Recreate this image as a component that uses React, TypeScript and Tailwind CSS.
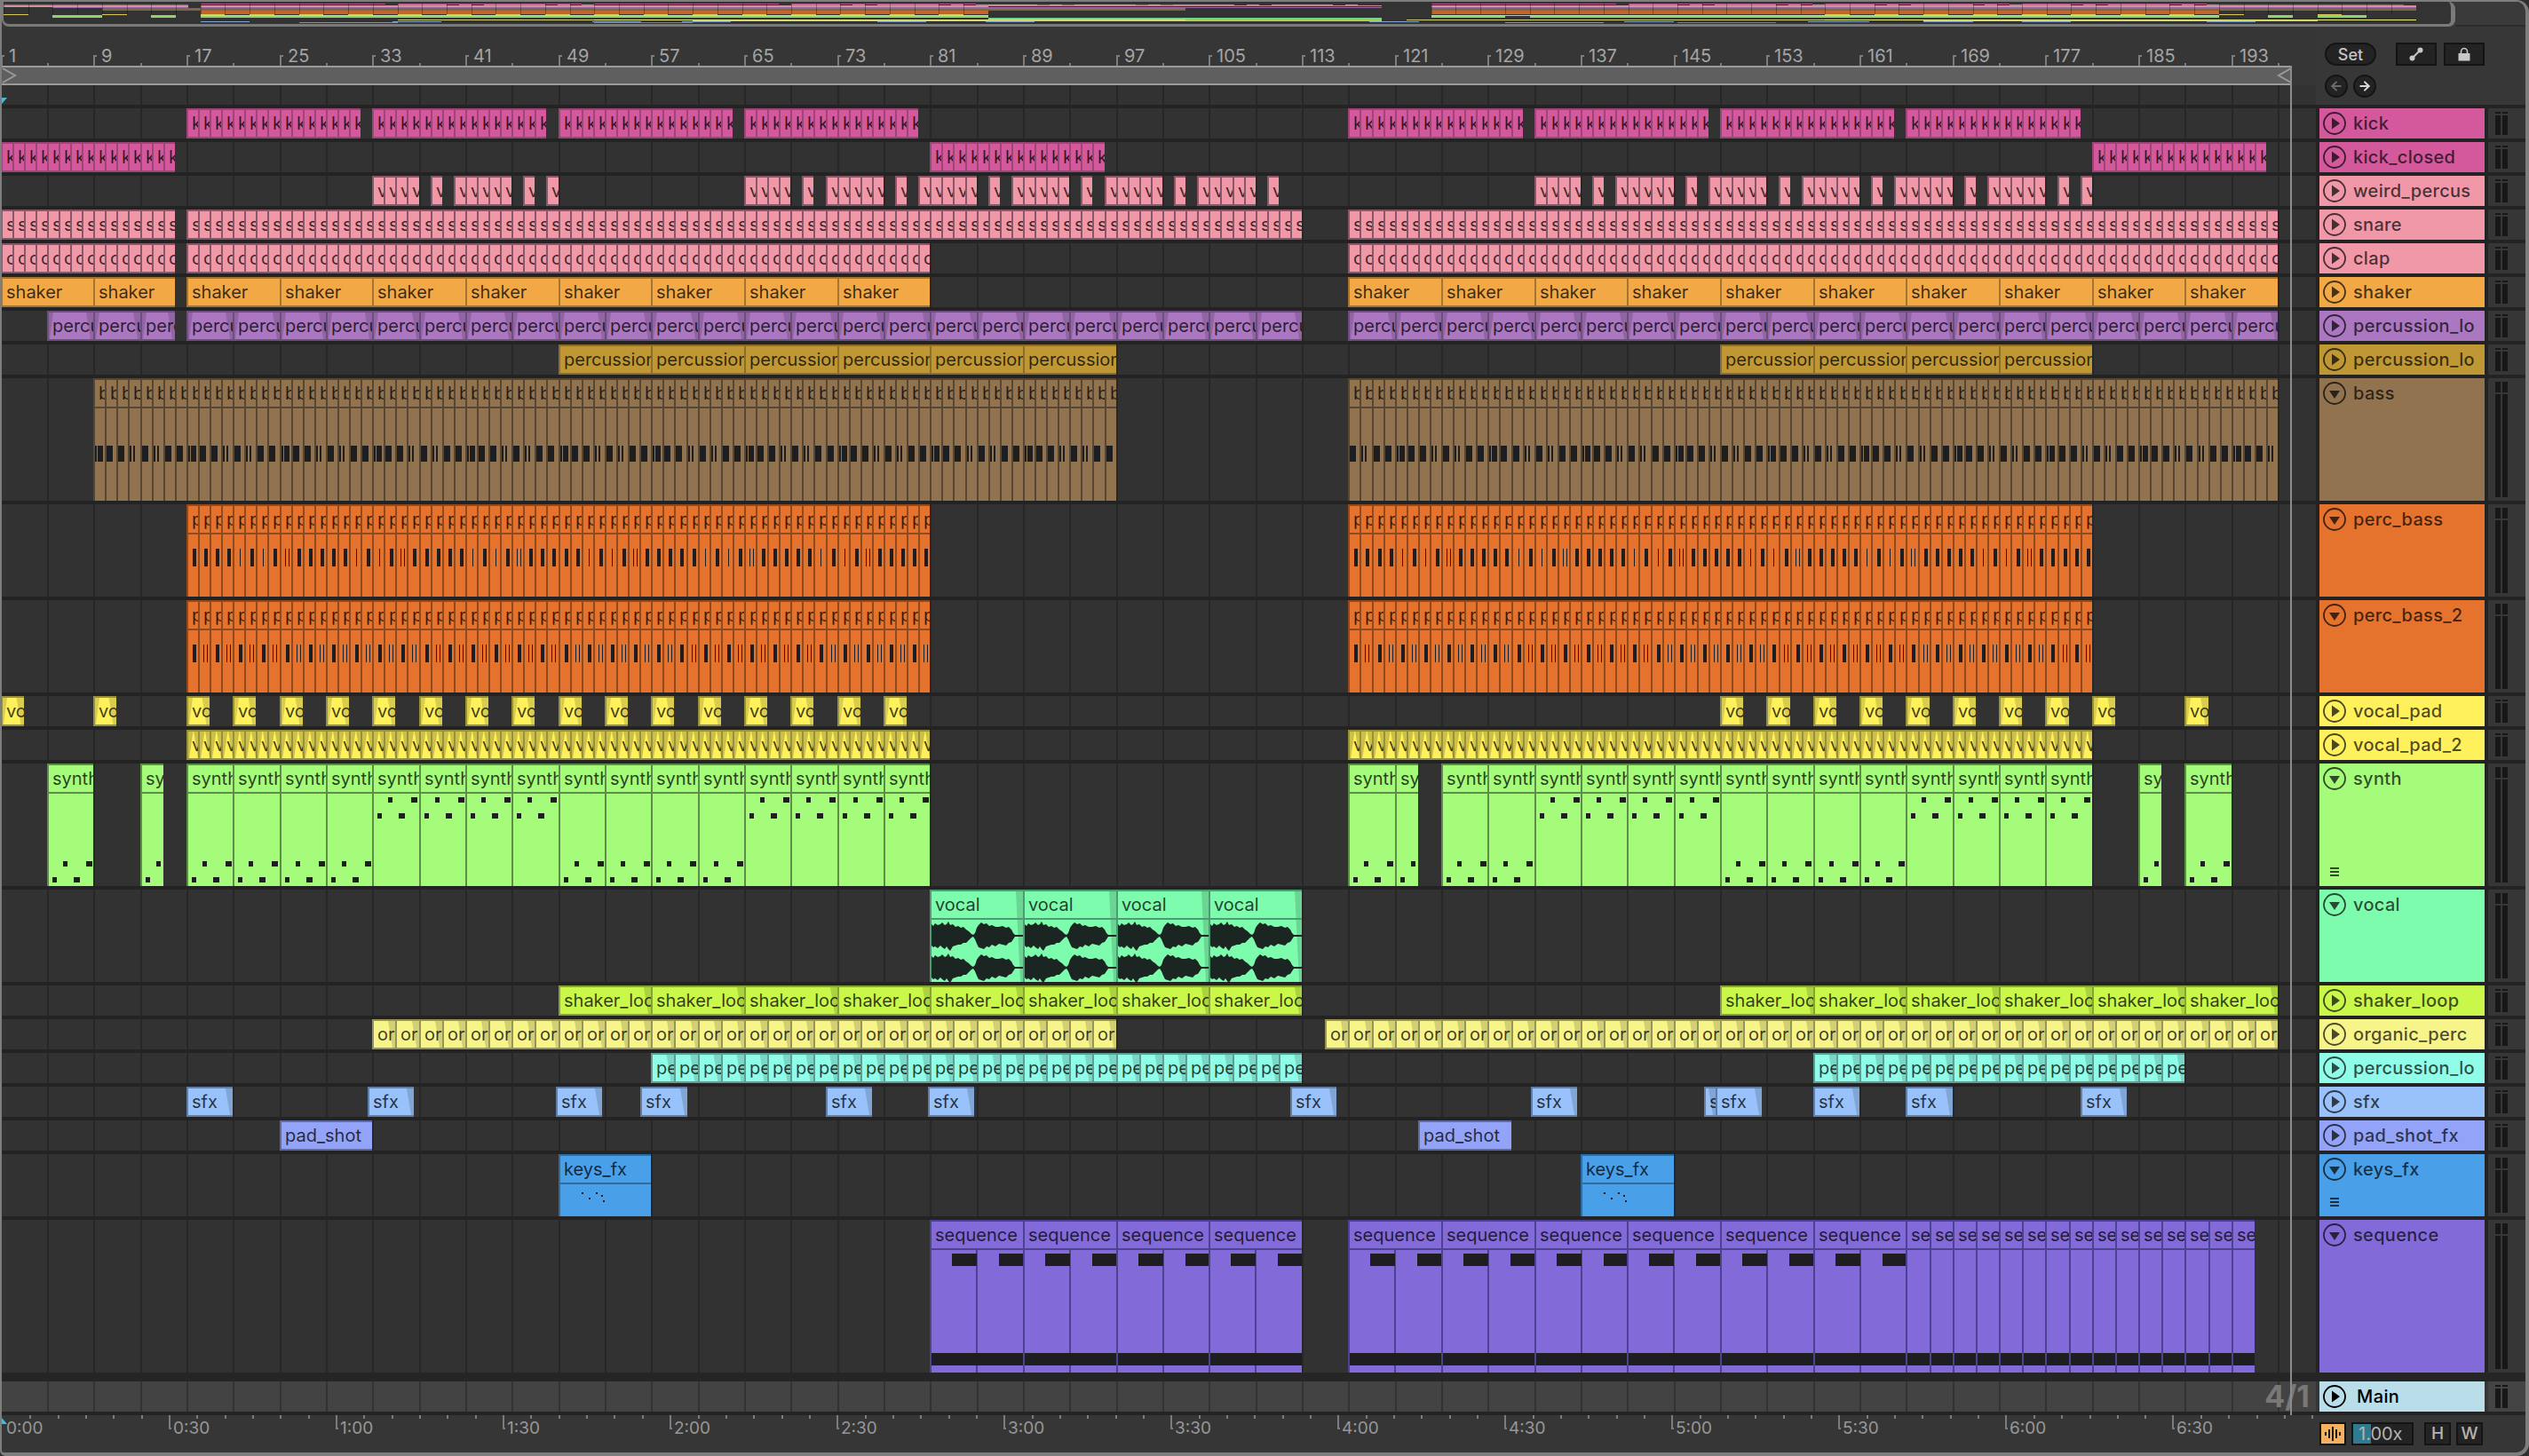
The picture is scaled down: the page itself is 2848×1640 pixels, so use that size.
import type { ReactElement, ReactNode } from 'react'
import { ArrowLeft, ArrowRight } from 'lucide-react'

type Run = [number, number, number]
type Note = [number, number, number, number]

interface Track {
  name: string
  label: string
  height: number
  bg: string
  border: string
  runs: Run[]
  title?: boolean
  open?: boolean
  menu?: boolean
  split?: boolean
  wave?: boolean
  fades?: string[]
  notes?: (start: number, end: number) => Note[]
}

const fadeRight = 'bg-black/15 [clip-path:polygon(calc(100%-8px)_0,100%_0,100%_100%,calc(100%-3px)_100%)]'
const fadeLeft = 'bg-black/15 [clip-path:polygon(0_0,5px_0,1px_100%,0_100%)]'
const fadeWide = 'bg-black/15 [clip-path:polygon(65%_0,100%_0,100%_100%,85%_100%)]'
const fadeDiagLeft = 'bg-black/20 [clip-path:polygon(0_0,50%_0,10%_100%,0_100%)]'
const fadeDiagRight = 'bg-black/20 [clip-path:polygon(55%_0,100%_0,100%_100%)]'

// bar -> pixel, the arrangement runs at about 13.085px per bar
const barX = (bar: number): number => Math.round(0.5 + (bar - 1) * 13.085) - 2
const miniX = (bar: number): number => (bar - 1) * 13.86

const bassFull: Note[] = [[0, 74, 7, 18]]
const bassDouble: Note[] = [[0, 74, 2, 18], [3, 74, 6, 18]]
const bassThin: Note[] = [[0, 74, 2, 18], [4, 74, 2, 18]]
const bassPattern = [bassFull, bassDouble, bassFull, bassFull, bassThin, bassFull, bassThin, bassFull]

const percFull: Note[] = [[5, 48, 4, 20]]
const percThin: Note[] = [[6, 48, 1, 20]]
const percPair: Note[] = [[4, 48, 1, 20], [8, 48, 1, 20]]
const percPattern = [percFull, percFull, percFull, percFull, percThin, percFull, percThin, percFull, percPair, percFull]

const synthNotes = (start: number): Note[] => {
  const high = (start >= 33 && start < 49) || (start >= 65 && start < 81) || (start >= 133 && start < 149) || (start >= 165 && start < 181)
  const upper = high ? 36 : 108
  const lower = high ? 54 : 126
  return [
    [4, lower, 5, 6],
    [16, upper, 5, 6],
    [28, lower, 7, 6],
    [42, upper, 7, 6],
  ]
}

const sequenceNotes = (start: number, end: number): Note[] => {
  if (end - start < 8) return [[0, 148, 30, 14]]
  return [
    [23, 36, 28, 14],
    [76, 36, 28, 14],
    [0, 148, 110, 14],
  ]
}

const tracks: Track[] = [
  { name: 'kick', label: 'k', height: 34, bg: 'bg-[#d3589c]', border: 'border-[#9c4577]', fades: [], runs: [[17, 32, 1], [33, 48, 1], [49, 64, 1], [65, 80, 1], [117, 132, 1], [133, 148, 1], [149, 164, 1], [165, 180, 1]] },
  { name: 'kick_closed', label: 'k', height: 34, bg: 'bg-[#d3589c]', border: 'border-[#9c4577]', runs: [[1, 16, 1], [81, 96, 1], [181, 196, 1]] },
  { name: 'weird_percus', label: 'v', height: 34, bg: 'bg-[#f098a8]', border: 'border-[#86586a]', runs: [[33, 37, 1], [38, 39, 1], [40, 45, 1], [46, 47, 1], [48, 49, 1], [65, 69, 1], [70, 71, 1], [72, 77, 1], [78, 79, 1], [80, 85, 1], [86, 87, 1], [88, 93, 1], [94, 95, 1], [96, 101, 1], [102, 103, 1], [104, 109, 1], [110, 111, 1], [133, 137, 1], [138, 139, 1], [140, 145, 1], [146, 147, 1], [148, 153, 1], [154, 155, 1], [156, 161, 1], [162, 163, 1], [164, 169, 1], [170, 171, 1], [172, 177, 1], [178, 179, 1], [180, 181, 1]] },
  { name: 'snare', label: 's', height: 34, bg: 'bg-[#f098a8]', border: 'border-[#86586a]', runs: [[1, 16, 1], [17, 113, 1], [117, 197, 1]] },
  { name: 'clap', label: 'c', height: 34, bg: 'bg-[#f098a8]', border: 'border-[#86586a]', runs: [[1, 16, 1], [17, 81, 1], [117, 197, 1]] },
  { name: 'shaker', label: 'shaker', height: 34, bg: 'bg-[#f2a945]', border: 'border-[#a37434]', runs: [[1, 16, 8], [17, 81, 8], [117, 197, 8]] },
  { name: 'percussion_lo', label: 'percussion', height: 34, bg: 'bg-[#ab77c0]', border: 'border-[#6c4f7c]', fades: [fadeLeft, fadeRight], runs: [[5, 16, 4], [17, 113, 4], [117, 197, 4]] },
  { name: 'percussion_lo', label: 'percussion', height: 34, bg: 'bg-[#bf9835]', border: 'border-[#8a6e2a]', runs: [[49, 97, 8], [149, 181, 8]] },
  { name: 'bass', label: 'b', height: 138, bg: 'bg-[#927350]', border: 'border-[#574631]', title: true, open: true, runs: [[9, 97, 1], [117, 197, 1]], notes: (start) => bassPattern[start % 8] },
  { name: 'perc_bass', label: 'p', height: 104, bg: 'bg-[#e6732d]', border: 'border-[#8e4b20]', title: true, open: true, runs: [[17, 81, 1], [117, 181, 1]], notes: (start) => percPattern[(start + 3) % 10] },
  { name: 'perc_bass_2', label: 'p', height: 104, bg: 'bg-[#e6732d]', border: 'border-[#8e4b20]', title: true, open: true, runs: [[17, 81, 1], [117, 181, 1]], notes: (start) => (start % 2 === 0 ? percPair : percFull) },
  { name: 'vocal_pad', label: 'vo', height: 34, bg: 'bg-[#fff15c]', border: 'border-[#97913f]', fades: [fadeLeft, fadeWide], runs: [[1, 3, 2], [9, 11, 2], [17, 19, 2], [21, 23, 2], [25, 27, 2], [29, 31, 2], [33, 35, 2], [37, 39, 2], [41, 43, 2], [45, 47, 2], [49, 51, 2], [53, 55, 2], [57, 59, 2], [61, 63, 2], [65, 67, 2], [69, 71, 2], [73, 75, 2], [77, 79, 2], [149, 151, 2], [153, 155, 2], [157, 159, 2], [161, 163, 2], [165, 167, 2], [169, 171, 2], [173, 175, 2], [177, 179, 2], [181, 183, 2], [189, 191, 2]] },
  { name: 'vocal_pad_2', label: 'v', height: 34, bg: 'bg-[#fff15c]', border: 'border-[#97913f]', fades: [fadeDiagLeft, fadeDiagRight], runs: [[17, 81, 1], [117, 181, 1]] },
  { name: 'synth', label: 'synth', height: 138, bg: 'bg-[#a5fb7a]', border: 'border-[#5f8c4a]', title: true, open: true, menu: true, runs: [[5, 9, 4], [13, 15, 2], [17, 81, 4], [117, 121, 4], [121, 123, 2], [125, 181, 4], [185, 187, 2], [189, 193, 4]], notes: (start) => synthNotes(start) },
  { name: 'vocal', label: 'vocal', height: 104, bg: 'bg-[#7efcae]', border: 'border-[#4b9c72]', title: true, open: true, wave: true, fades: [fadeRight], runs: [[81, 113, 8]] },
  { name: 'shaker_loop', label: 'shaker_loop', height: 34, bg: 'bg-[#c9f74a]', border: 'border-[#86a333]', fades: [fadeRight], runs: [[49, 113, 8], [149, 197, 8]] },
  { name: 'organic_perc', label: 'or', height: 34, bg: 'bg-[#f7f48a]', border: 'border-[#97945a]', fades: [fadeRight], runs: [[33, 97, 2], [115, 197, 2]] },
  { name: 'percussion_lo', label: 'pe', height: 34, bg: 'bg-[#90fde8]', border: 'border-[#5f9c92]', fades: [fadeWide], runs: [[57, 113, 2], [157, 189, 2]] },
  { name: 'sfx', label: 'sfx', height: 34, bg: 'bg-[#98c2f9]', border: 'border-[#617ea6]', fades: [fadeRight], runs: [[17, 21, 4], [32.6, 36.6, 4], [48.8, 52.8, 4], [56.1, 60.1, 4], [72, 76, 4], [80.8, 84.8, 4], [112, 116, 4], [132.7, 136.7, 4], [147.6, 148.6, 1], [148.6, 152.6, 4], [157, 161, 4], [165, 169, 4], [180, 184, 4]] },
  { name: 'pad_shot_fx', label: 'pad_shot', height: 34, bg: 'bg-[#93a4f8]', border: 'border-[#5f6ba6]', runs: [[25, 33, 8], [123, 131, 8]] },
  { name: 'keys_fx', label: 'keys_fx', height: 70, bg: 'bg-[#499fe8]', border: 'border-[#2f6c9f]', title: true, open: true, menu: true, runs: [[49, 57, 8], [137, 145, 8]], notes: () => [[24, 41, 2, 2], [32, 47, 2, 2], [40, 41, 2, 2], [46, 44, 2, 2], [48, 50, 2, 2]] },
  { name: 'sequence', label: 'sequence', height: 172, bg: 'bg-[#826bd8]', border: 'border-[#4d4191]', title: true, open: true, split: true, runs: [[81, 113, 8], [117, 165, 8], [165, 195, 2]], notes: sequenceNotes },
]

const gridBars = Array.from({ length: 49 }, (_, i) => 5 + i * 4)
const rulerBars = Array.from({ length: 25 }, (_, i) => 1 + i * 8)
const timeLabels = ['0:00', '0:30', '1:00', '1:30', '2:00', '2:30', '3:00', '3:30', '4:00', '4:30', '5:00', '5:30', '6:00', '6:30']

const envelope: [number, number, number][] = [
  [0, 13, 11], [2, 11, 13], [4, 14, 12], [7, 12, 14], [10, 13, 11], [12, 15, 13], [15, 12, 15], [17, 13, 12], [19, 16, 15], [21, 12, 17], [24, 13, 12], [27, 10, 11], [30, 11, 10], [33, 9, 10], [36, 10, 8], [39, 7, 8], [42, 5, 5], [45, 2, 2], [47, 1, 1], [49, 3, 4], [51, 9, 9], [53, 12, 13], [56, 15, 14], [59, 13, 15], [62, 14, 12], [65, 11, 13], [68, 12, 10], [72, 10, 12], [76, 10, 9], [80, 11, 10], [84, 9, 11], [87, 10, 8], [90, 7, 7], [92, 3, 4], [94, 1, 1], [104, 1, 1],
]

function Waveform(): ReactElement {
  const channel = (mid: number): string => {
    const top = envelope.map(([x, up]) => `${x},${mid - up}`)
    const bottom = [...envelope].reverse().map(([x, , down]) => `${x},${mid + down}`)
    return [...top, ...bottom].join(' ')
  }
  return (
    <svg className="absolute left-0 top-[32px]" width="104" height="72" viewBox="0 0 104 72">
      <polygon points={channel(18)} fill="#1b2521" />
      <polygon points={channel(54)} fill="#1b2521" />
    </svg>
  )
}

function Clip({ track, start, end }: { track: Track; start: number; end: number }): ReactElement {
  const left = barX(start)
  const width = barX(end) - left
  const notes = track.notes ? track.notes(start, end) : []
  // only what fits in the clip is drawn, like the arrangement does
  const label = track.label.slice(0, Math.ceil((width - 6) / 10))
  return (
    <div
      className={`absolute inset-y-0 overflow-hidden border-l-2 border-t-2 ${track.title ? '' : 'border-b-2'} ${track.bg} ${track.border}`}
      style={{ left, width }}
    >
      {(track.fades ?? []).map((fade) => (
        <div key={fade} className={`absolute inset-0 ${fade}`} />
      ))}
      {track.split && end - start === 8 && (
        <div className={`absolute bottom-0 left-[50px] top-[32px] border-l-2 ${track.border}`} />
      )}
      {notes.map(([x, y, w, h]) => (
        <div key={`${x}-${y}`} className="absolute bg-[#1e1e20]" style={{ left: x, top: y, width: w, height: h }} />
      ))}
      {track.wave && <Waveform />}
      <div
        className={`relative whitespace-nowrap pl-[4px] text-[20px] leading-[30px] text-black/75 ${track.title ? `h-[32px] border-b-2 ${track.border}` : ''}`}
      >
        {label}
      </div>
    </div>
  )
}

function GridLines({ color }: { color: string }): ReactElement {
  return (
    <>
      {gridBars.map((bar) => (
        <div key={bar} className={`absolute inset-y-0 w-[2px] ${color}`} style={{ left: barX(bar) }} />
      ))}
    </>
  )
}

function TrackButton({ open }: { open?: boolean }): ReactElement {
  return (
    <svg width="26" height="26" viewBox="0 0 26 26" className="shrink-0">
      <circle cx="13" cy="13" r="12" fill="none" stroke="currentColor" strokeWidth="1.8" />
      <path d={open ? 'M7 10 H19 L13 19 Z' : 'M10 6.5 L19 13 L10 19.5 Z'} fill="currentColor" />
    </svg>
  )
}

function Meter({ tall, light }: { tall: boolean; light?: boolean }): ReactElement {
  const bar = (
    <div className="flex w-[6px] flex-col gap-[2px]">
      <div className={`bg-[#171717] ${tall ? 'h-[12px]' : 'h-[2px]'}`} />
      <div className="flex-1 bg-[#171717]" />
    </div>
  )
  return (
    <div className={`ml-[4px] flex w-[42px] gap-[2px] pb-[4px] pl-[8px] pt-[4px] ${light ? 'bg-[#444444]' : 'bg-[#363636]'}`}>
      {bar}
      {bar}
    </div>
  )
}

function TrackRow({ track }: { track: Track }): ReactElement {
  const clips: [number, number][] = []
  track.runs.forEach(([start, end, step]) => {
    for (let s = start; s < end; s += step) clips.push([s, Math.min(s + step, end)])
  })
  return (
    <div className="flex" style={{ height: track.height }}>
      <div className="relative w-[2606px] overflow-hidden bg-[#323232]">
        <GridLines color="bg-[#272727]" />
        {clips.map(([start, end]) => (
          <Clip key={start} track={track} start={start} end={end} />
        ))}
      </div>
      <div className={`ml-[4px] flex w-[186px] flex-col justify-between tracking-[0.02em] text-black/70 ${track.bg}`}>
        <div className="flex h-[34px] shrink-0 items-center gap-[8px] pl-[4px] text-[20px] font-medium">
          <TrackButton open={track.open} />
          <span className="whitespace-nowrap">{track.name}</span>
        </div>
        {track.menu && (
          <div className="mb-[11px] ml-[12px] flex w-[10px] flex-col gap-[2px]">
            <div className="h-[2px] bg-current" />
            <div className="h-[2px] bg-current" />
            <div className="h-[2px] bg-current" />
          </div>
        )}
      </div>
      <Meter tall={track.height > 34} />
    </div>
  )
}

function Overview(): ReactElement {
  let y = 0
  const lines: ReactElement[] = []
  tracks.forEach((track, i) => {
    const top = 2 + y * 0.018
    const height = Math.max(1, track.height * 0.018)
    track.runs.forEach(([start, end]) => {
      lines.push(
        <div
          key={`${i}-${start}`}
          className={`absolute opacity-80 ${track.bg}`}
          style={{ left: miniX(start), width: miniX(end) - miniX(start), top, height }}
        />,
      )
    })
    y += track.height + 4
  })
  const ticks = Array.from({ length: 98 }, (_, i) => 1 + i * 2).filter((bar) => bar < 81 || bar > 116)
  return (
    <div className="flex h-[28px] bg-[#3a3a3a]">
      <div className="relative h-full w-[2763px] overflow-hidden rounded-b-[8px] rounded-tr-[8px] border-b-[3px] border-l-2 border-r-[5px] border-[#7a7a7a] bg-[#333333]">
        {lines}
        {ticks.map((bar) => (
          <div key={bar} className="absolute top-[2px] h-[12px] w-[1px] bg-black/30" style={{ left: miniX(bar) }} />
        ))}
      </div>
      <div className="flex-1 border-b-2 border-[#2b2b2b]" />
    </div>
  )
}

function Ruler(): ReactElement {
  return (
    <div className="relative h-[44px] overflow-hidden text-[20px] leading-[24px] text-[#a4a4a4]">
      {rulerBars.map((bar) => (
        <div key={bar} className="absolute top-[32px]" style={{ left: barX(bar) }}>
          <div className="h-[12px] w-[4px] border-l-2 border-t-2 border-[#7c7c7c]" />
          <span className="absolute left-[9px] top-[-11px]">{bar}</span>
        </div>
      ))}
      {rulerBars.map((bar) => (
        <div key={bar} className="absolute top-[41px] h-[3px] w-[2px] bg-[#7c7c7c]" style={{ left: barX(bar + 4) }} />
      ))}
    </div>
  )
}

function LoopBar(): ReactElement {
  return (
    <div className="relative h-[22px]">
      <div className="h-full w-[2577px] border-y-2 border-[#9a9a9a] bg-[#5f5f5f]" />
      <svg className="absolute left-0 top-[2px]" width="18" height="18" viewBox="0 0 18 18">
        <path d="M1 1 L15 9 L1 17" fill="none" stroke="#9a9a9a" strokeWidth="2" />
      </svg>
      <svg className="absolute left-[2561px] top-[2px]" width="18" height="18" viewBox="0 0 18 18">
        <path d="M17 1 L3 9 L17 17" fill="none" stroke="#9a9a9a" strokeWidth="2" />
      </svg>
    </div>
  )
}

function SquareButton({ children, className }: { children: ReactNode; className: string }): ReactElement {
  return (
    <div className={`flex items-center justify-center border-2 border-[#141414] bg-[#232323] ${className}`}>
      {children}
    </div>
  )
}

function ControlPanel(): ReactElement {
  return (
    <div className="flex-1 bg-[#373737] pl-[10px] pt-[18px]">
      <div className="flex items-center">
        <div className="flex h-[26px] w-[58px] items-center justify-center rounded-full border-2 border-[#141414] bg-[#232323] text-[18px] font-medium text-[#c4c4c4]">
          Set
        </div>
        <SquareButton className="ml-[22px] h-[26px] w-[46px]">
          <svg width="16" height="16" viewBox="0 0 16 16">
            <path d="M3.5 12.5 L12.5 3.5" stroke="#c8c8c8" strokeWidth="2" />
            <circle cx="3.5" cy="12.5" r="3" fill="#c8c8c8" />
            <circle cx="12.5" cy="3.5" r="3" fill="#c8c8c8" />
          </svg>
        </SquareButton>
        <SquareButton className="ml-[8px] h-[26px] w-[46px]">
          <svg width="16" height="16" viewBox="0 0 16 16">
            <path d="M4.5 7 V5 a3.5 3.5 0 0 1 7 0 V7" fill="none" stroke="#c8c8c8" strokeWidth="1.6" />
            <rect x="1.5" y="7" width="13" height="8.5" fill="#c8c8c8" />
          </svg>
        </SquareButton>
      </div>
      <div className="mt-[10px] flex gap-[6px]">
        <div className="flex h-[26px] w-[26px] items-center justify-center rounded-full border-2 border-[#141414] bg-[#232323] text-[#6a6a6a]">
          <ArrowLeft size={16} strokeWidth={3} />
        </div>
        <div className="flex h-[26px] w-[26px] items-center justify-center rounded-full border-2 border-[#141414] bg-[#232323] text-[#d8d8d8]">
          <ArrowRight size={16} strokeWidth={3} />
        </div>
      </div>
    </div>
  )
}

function MainRow(): ReactElement {
  return (
    <div className="flex h-[34px]">
      <div className="relative w-[2606px] overflow-hidden bg-[#434343]">
        <GridLines color="bg-[#333333]" />
        <span className="absolute right-[7px] top-0 text-[34px] font-bold leading-[34px] text-[#787878]">4/1</span>
      </div>
      <div className="ml-[4px] flex w-[186px] items-center gap-[12px] bg-[#b9dde9] pl-[4px] text-[20px] font-medium tracking-[0.02em] text-black">
        <TrackButton />
        <span>Main</span>
      </div>
      <Meter tall={false} light />
    </div>
  )
}

function TimeRuler(): ReactElement {
  const ticks = Array.from({ length: 84 }, (_, i) => i)
  return (
    <div className="flex h-[42px]">
      <div className="relative w-[2606px] overflow-hidden text-[19px] leading-[24px] text-[#979797]">
        {ticks.map((k) =>
          k % 6 === 0 ? null : (
            <div key={k} className="absolute top-0 h-[4px] w-[2px] bg-[#7c7c7c]" style={{ left: k * 31.34 }} />
          ),
        )}
        {timeLabels.map((label, i) => (
          <div key={label} className="absolute top-0" style={{ left: i * 188 }}>
            {i > 0 && <div className="h-[16px] w-[3px] border-b-2 border-l-2 border-[#7c7c7c]" />}
            <span className="absolute left-[5px] top-[3px]">{label}</span>
          </div>
        ))}
        <div className="absolute left-0 top-[3px] h-[7px] w-[6px] bg-[#4db8d4] [clip-path:polygon(0_0,100%_100%,0_100%)]" />
      </div>
      <div className="ml-[4px] flex items-start gap-[6px] pt-[8px]">
        <div className="flex h-[26px] w-[30px] items-center justify-center border-2 border-[#141414] bg-[#f5b162]">
          <svg width="20" height="16" viewBox="0 0 20 16">
            <path d="M2 6 V10 M6 3 V13 M10 0 V16 M14 3 V13 M18 6 V10" stroke="#1d1d1d" strokeWidth="2" />
          </svg>
        </div>
        <div className="relative flex h-[26px] w-[70px] items-center border-2 border-[#141414] bg-[#232323] pl-[6px] text-[20px] text-[#b4b4b4]">
          <div className="absolute inset-y-0 left-0 w-[20px] bg-[#2f7a8f]" />
          <span className="relative">1.00x</span>
        </div>
        <div className="ml-[6px] flex h-[26px] w-[30px] items-center justify-center border-2 border-[#141414] bg-[#232323] text-[19px] font-medium text-[#b4b4b4]">
          H
        </div>
        <div className="flex h-[26px] w-[30px] items-center justify-center border-2 border-[#141414] bg-[#232323] text-[19px] font-medium text-[#b4b4b4]">
          W
        </div>
      </div>
    </div>
  )
}

export default function App(): ReactElement {
  return (
    <div className="h-[1640px] w-[2848px] bg-[#2f2f2f] font-['Inter',sans-serif]">
      <div className="relative h-full w-full overflow-hidden rounded-r-[14px] rounded-bl-[6px] border-b-4 border-l-2 border-r-4 border-t-2 border-[#7e7e7e] bg-[#363636]">
        <Overview />
        <div className="flex h-[88px]">
          <div className="w-[2606px]">
            <Ruler />
            <LoopBar />
            <div className="relative h-[22px] overflow-hidden bg-[#323232]">
              <GridLines color="bg-[#272727]" />
              <div className="absolute left-0 top-[14px] h-[7px] w-[6px] bg-[#4db8d4] [clip-path:polygon(0_0,100%_0,0_100%)]" />
            </div>
          </div>
          <ControlPanel />
        </div>
        <div className="flex flex-col gap-[4px] bg-[#232323] pt-[4px]">
          {tracks.map((track, i) => (
            <TrackRow key={`${track.name}-${i}`} track={track} />
          ))}
        </div>
        <div className="h-[10px] bg-[#252525]" />
        <MainRow />
        <div className="h-[4px] bg-[#232323]" />
        <TimeRuler />
        <div className="pointer-events-none absolute left-[2577px] top-[72px] h-[1520px] w-[2px] bg-[#8c8c8c]" />
      </div>
    </div>
  )
}
